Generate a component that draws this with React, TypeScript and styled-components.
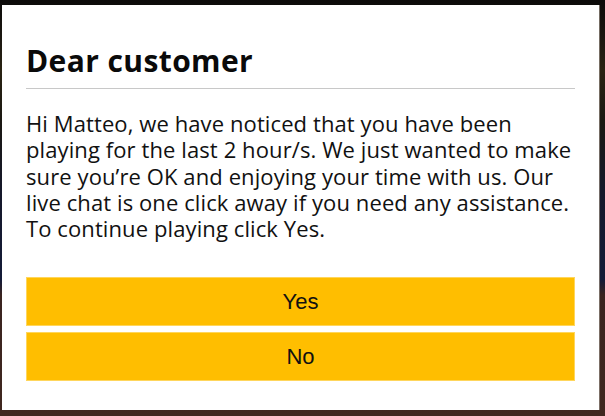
import React from 'react'
import styled, { createGlobalStyle } from 'styled-components'

const GlobalStyle = createGlobalStyle`
  html, body {
    margin: 0;
    padding: 0;
  }

  body {
    width: 605px;
    height: 416px;
    overflow: hidden;
    background: linear-gradient(
      to bottom,
      #0c0b0a 0px,
      #1c1811 40px,
      #2a2313 70px,
      #1b1812 120px,
      #15182a 190px,
      #141b38 280px,
      #3a2420 295px,
      #40271f 416px
    );
    font-family: 'Open Sans', 'Liberation Sans', sans-serif;
  }
`

const Backdrop = styled.div`
  display: flex;
  align-items: flex-start;
  box-sizing: border-box;
  width: 605px;
  height: 416px;
  padding: 5px 6px 6px 2px;
`

const ModalContainer = styled.div`
  box-sizing: border-box;
  width: 597px;
  height: 405px;
  background: #ffffff;
  box-shadow: 1px 0 0 rgba(140, 130, 120, 0.8);
  padding: 38px 24px 29px 24px;
  display: flex;
  flex-direction: column;
`

const Heading = styled.h2`
  margin: 0;
  font-family: 'Open Sans', 'Liberation Sans', sans-serif;
  font-weight: 700;
  font-size: 30px;
  letter-spacing: 0.4px;
  line-height: 36px;
  color: #0a0a0a;
  padding-bottom: 9px;
  border-bottom: 1px solid #c8c8c8;
`

const Message = styled.p`
  margin: 21px 0 0 0;
  font-size: 22px;
  letter-spacing: 0.1px;
  line-height: 26.3px;
  color: #111111;
  flex: 1;
`

const Actions = styled.div`
  display: flex;
  flex-direction: column;
  gap: 6px;
`

const ActionButton = styled.button`
  box-sizing: border-box;
  width: 100%;
  height: 49px;
  background: #ffbe00;
  border: 1px solid #ffd65c;
  color: #111111;
  font-family: 'Liberation Sans', Arial, sans-serif;
  font-size: 22px;
  cursor: pointer;

  &:hover {
    background: #ffc824;
  }
`

const App: React.FC = () => {
  return (
    <>
      <GlobalStyle />
      <Backdrop>
        <ModalContainer>
          <Heading>Dear customer</Heading>
          <Message>
            Hi Matteo, we have noticed that you have been playing for the last 2 hour/s. We just
            wanted to make sure you’re OK and enjoying your time with us. Our live chat is one
            click away if you need any assistance. To continue playing click Yes.
          </Message>
          <Actions>
            <ActionButton>Yes</ActionButton>
            <ActionButton>No</ActionButton>
          </Actions>
        </ModalContainer>
      </Backdrop>
    </>
  )
}

export default App
